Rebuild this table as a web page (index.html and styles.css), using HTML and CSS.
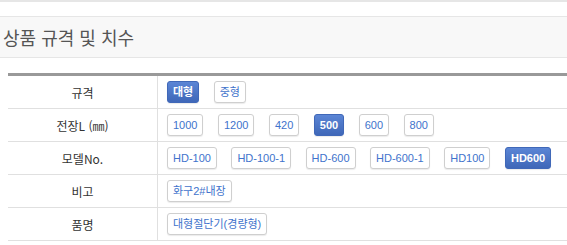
FILE: index.html
```html
<!DOCTYPE html>
<html lang="ko">
<head>
<meta charset="utf-8">
<title>상품 규격 및 치수</title>
<link rel="stylesheet" href="styles.css">
</head>
<body>
<div class="topline"></div>
<div class="section-head">상품 규격 및 치수</div>
<table class="spec">
  <tr>
    <th>규격</th>
    <td><div class="opts"><span class="btn on">대형</span><span class="btn">중형</span></div></td>
  </tr>
  <tr>
    <th>전장L (㎜)</th>
    <td><div class="opts"><span class="btn">1000</span><span class="btn">1200</span><span class="btn">420</span><span class="btn on">500</span><span class="btn">600</span><span class="btn">800</span></div></td>
  </tr>
  <tr>
    <th>모델No.</th>
    <td><div class="opts"><span class="btn">HD-100</span><span class="btn">HD-100-1</span><span class="btn">HD-600</span><span class="btn">HD-600-1</span><span class="btn">HD100</span><span class="btn on">HD600</span></div></td>
  </tr>
  <tr>
    <th>비고</th>
    <td><div class="opts"><span class="btn">화구2#내장</span></div></td>
  </tr>
  <tr>
    <th>품명</th>
    <td><div class="opts"><span class="btn">대형절단기(경량형)</span></div></td>
  </tr>
</table>
</body>
</html>
```
FILE: styles.css
```css
html, body {
  margin: 0;
  padding: 0;
  background: #fff;
  font-family: "Noto Sans", "Noto Sans CJK KR", sans-serif;
  overflow: hidden;
}
.topline {
  height: 0;
  border-top: 2px solid #e6e6e6;
}
.section-head {
  margin-top: 14px;
  height: 40px;
  line-height: 40px;
  background: #f8f8f8;
  border-top: 1px solid #e6e6e6;
  border-bottom: 1px solid #e6e6e6;
  padding-left: 3px;
  font-size: 18px;
  color: #555;
  font-family: "Noto Sans CJK KR", sans-serif;
}
.spec {
  margin: 15px 0 0 8px;
  width: 559px;
  border-collapse: collapse;
  border-top: 3px solid #999;
}
.spec tr {
  border-bottom: 1px solid #e0e0e0;
}
.spec th {
  width: 149px;
  height: 32px;
  padding: 0;
  font-weight: normal;
  font-size: 12px;
  color: #333;
  text-align: center;
  border-right: 1px solid #e0e0e0;
  font-family: "Noto Sans CJK KR", sans-serif;
}
.spec td {
  height: 32px;
  padding: 0 0 0 9px;
}
.opts {
  display: flex;
  gap: 14.5px;
  align-items: center;
}
.btn {
  display: inline-block;
  height: 20px;
  line-height: 20px;
  padding: 0 5px;
  border: 1px solid #cfcfcf;
  border-radius: 3px;
  box-shadow: 0 1px 1px rgba(0,0,0,0.08);
  font-family: "Liberation Sans", "Noto Sans CJK KR", sans-serif;
  font-size: 11px;
  color: #4173cc;
  background: #fff;
  white-space: nowrap;
}
.btn.on {
  background: linear-gradient(#5b85d5, #3f67b8);
  border-color: #4068b8;
  color: #fff;
  font-weight: bold;
}
```
